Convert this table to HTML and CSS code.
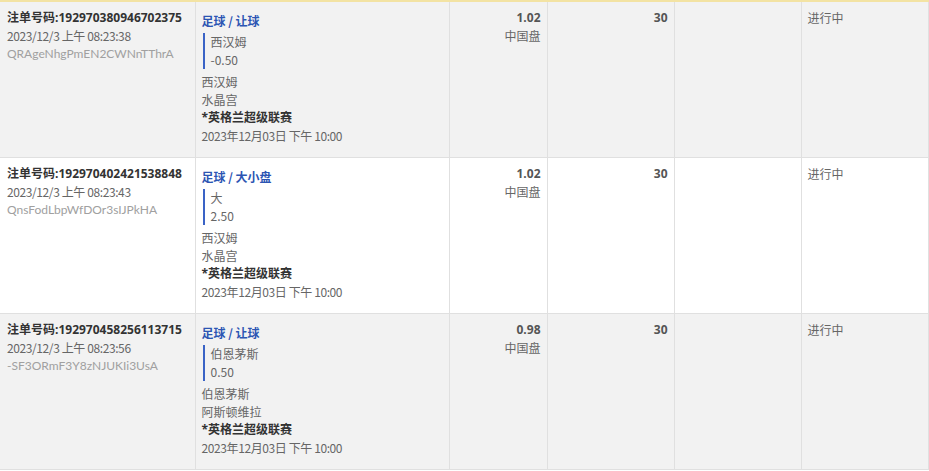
FILE: index.html
```html
<!DOCTYPE html>
<html lang="zh">
<head>
<meta charset="utf-8">
<link rel="stylesheet" href="styles.css">
</head>
<body>
<table class="bets">
  <colgroup>
    <col class="c1"><col class="c2"><col class="c3"><col class="c4"><col class="c5"><col class="c6">
  </colgroup>
  <tbody>
    <tr class="row odd first">
      <td class="cell id">
        <div class="bold">注单号码:192970380946702375</div>
        <div class="date">2023/12/3 上午 08:23:38</div>
        <div class="light">QRAgeNhgPmEN2CWNnTThrA</div>
      </td>
      <td class="cell detail">
        <div class="title">足球 / 让球</div>
        <div class="pick"><div>西汉姆</div><div>-0.50</div></div>
        <div class="teams">西汉姆</div>
        <div>水晶宫</div>
        <div class="bold">*英格兰超级联赛</div>
        <div class="date">2023年12月03日 下午 10:00</div>
      </td>
      <td class="cell num"><div class="bold">1.02</div><div>中国盘</div></td>
      <td class="cell num"><div class="bold">30</div></td>
      <td class="cell"></td>
      <td class="cell status">进行中</td>
    </tr>
    <tr class="row even">
      <td class="cell id">
        <div class="bold">注单号码:192970402421538848</div>
        <div class="date">2023/12/3 上午 08:23:43</div>
        <div class="light">QnsFodLbpWfDOr3sIJPkHA</div>
      </td>
      <td class="cell detail">
        <div class="title">足球 / 大小盘</div>
        <div class="pick"><div>大</div><div>2.50</div></div>
        <div class="teams">西汉姆</div>
        <div>水晶宫</div>
        <div class="bold">*英格兰超级联赛</div>
        <div class="date">2023年12月03日 下午 10:00</div>
      </td>
      <td class="cell num"><div class="bold">1.02</div><div>中国盘</div></td>
      <td class="cell num"><div class="bold">30</div></td>
      <td class="cell"></td>
      <td class="cell status">进行中</td>
    </tr>
    <tr class="row odd">
      <td class="cell id">
        <div class="bold">注单号码:192970458256113715</div>
        <div class="date">2023/12/3 上午 08:23:56</div>
        <div class="light">-SF3ORmF3Y8zNJUKIi3UsA</div>
      </td>
      <td class="cell detail">
        <div class="title">足球 / 让球</div>
        <div class="pick"><div>伯恩茅斯</div><div>0.50</div></div>
        <div class="teams">伯恩茅斯</div>
        <div>阿斯顿维拉</div>
        <div class="bold">*英格兰超级联赛</div>
        <div class="date">2023年12月03日 下午 10:00</div>
      </td>
      <td class="cell num"><div class="bold">0.98</div><div>中国盘</div></td>
      <td class="cell num"><div class="bold">30</div></td>
      <td class="cell"></td>
      <td class="cell status">进行中</td>
    </tr>
  </tbody>
</table>
</body>
</html>
```

FILE: styles.css
```css
html, body {
  margin: 0;
  padding: 0;
  background: #ffffff;
}
body {
  font-family: "Noto Sans CJK SC", sans-serif;
  font-size: 12px;
  line-height: 18px;
  color: #666666;
}
.bets {
  width: 928px;
  border-collapse: collapse;
  table-layout: fixed;
  border-top: 2px solid #f3e3a3;
}
.c1 { width: 195px; }
.c2 { width: 254px; }
.c3 { width: 98px; }
.c4 { width: 127px; }
.c5 { width: 127px; }
.c6 { width: 127px; }
.row.odd { background: #f2f2f2; }
.row.even { background: #ffffff; }
.row { height: 156px; }
.cell {
  vertical-align: top;
  padding: 7px 6px 6px;
  border-left: 1px solid #e0e0e0;
  border-right: 1px solid #e0e0e0;
  border-bottom: 1px solid #e0e0e0;
}
.cell.id {
  border-left: none;
  padding-left: 7px;
}
.bold {
  font-family: "Open Sans", "Noto Sans CJK SC", sans-serif;
  font-weight: 700;
  color: #333333;
}
.cell.num .bold { color: #555555; }
.date { letter-spacing: -0.4px; }
.light {
  font-family: Lato, "Noto Sans CJK SC", sans-serif;
  color: #a0a0a0;
}
.title {
  margin-top: 3px;
  font-size: 12px;
  font-weight: 700;
  color: #2c55b3;
}
.pick {
  margin-top: 3px;
  border-left: 2px solid #3a63c6;
  padding-left: 6px;
  margin-left: 1px;
}
.teams { margin-top: 4px; }
.num { text-align: right; }
.status { padding-left: 6px; }
```
